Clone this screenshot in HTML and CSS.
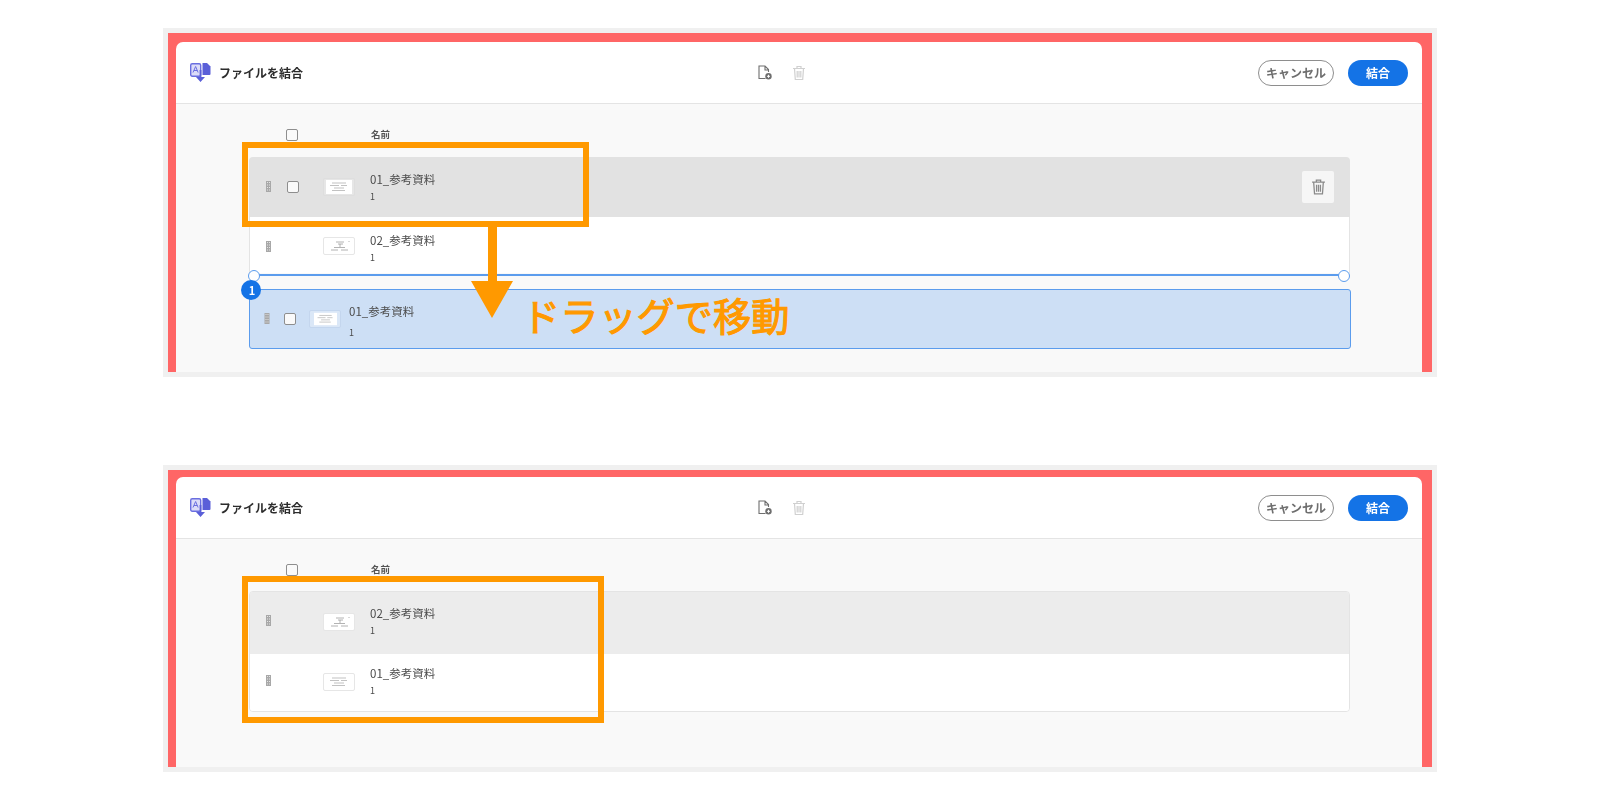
FILE: index.html
```html
<!DOCTYPE html>
<html lang="ja">
<head>
<meta charset="utf-8">
<title>ファイルを結合</title>
<link rel="stylesheet" href="styles.css">
</head>
<body>
<svg class="defs" width="0" height="0" aria-hidden="true">
  <defs>
    <symbol id="grip" viewBox="0 0 5 11">
      <rect width="5" height="11" fill="#a8a8a8"/>
      <path d="M1 1h1v1H1zM3 1h1v1H3zM1 3.500h1v1H1zM3 3.500h1v1H3zM1 6h1v1H1zM3 6h1v1H3zM1 8.500h1v1H1zM3 8.500h1v1H3z" fill="#e4e4e4"/>
    </symbol>
    <symbol id="doc-a" viewBox="0 0 26 14">
      <rect width="26" height="14" fill="#fff"/>
      <path d="M6 3h14M4 5.500h9M15 5.500h6M8 8h10M6 10.500h13" stroke="#a8a8a8" stroke-width=".7" fill="none"/>
    </symbol>
    <symbol id="doc-b" viewBox="0 0 26 14">
      <rect width="26" height="14" fill="#fff"/>
      <path d="M10 3h8M12 5h5M14 5v3M5 11h7M15 11h7M8 8.500h11M23 2v1" stroke="#a0a0a0" stroke-width=".8" fill="none"/>
    </symbol>
    <symbol id="trash" viewBox="0 0 14 16">
      <path d="M1 3.500h12M5 3.200V1.500h4v1.700M2.500 3.500l.8 11h7.400l.8-11M5.200 6v6.500M7 6v6.500M8.800 6v6.500" stroke="currentColor" stroke-width="1.200" fill="none"/>
    </symbol>
    <symbol id="logo" viewBox="0 0 21 21">
      <rect x=".7" y="1.700" width="10" height="12.500" rx="1.500" fill="#dcdcf8" stroke="#6a6ee0" stroke-width="1.400"/>
      <path d="M12.500 1H17l3.500 3.500V12a1 1 0 0 1-1 1h-7z" fill="#5a5fd8"/>
      <path d="M3 10.500 5.600 4.500l2.500 6M4 8.500h3.300" stroke="#6a6ee0" stroke-width="1" fill="none"/>
      <path d="M9.600 8h1.800v7H15l-4.500 5L6 15h3.600z" fill="#5a5fd8"/>
    </symbol>
  </defs>
</svg>

<section class="frame frame-first">
  <div class="card card-first">
    <header class="bar">
      <div class="bar-title">
        <svg class="logo"><use href="#logo"/></svg>
        <h1 class="title">ファイルを結合</h1>
      </div>
      <div class="bar-tools">
        <svg class="add-file" viewBox="0 0 15 15"><path d="M8.500 13.500H2V1h6l3.500 3.500V7M8 1v4h3.500" stroke="#6e6e6e" stroke-width="1.100" fill="none"/><circle cx="11.500" cy="11.300" r="3.200" fill="#6e6e6e"/><path d="M10 11.300h3M11.500 9.800v3" stroke="#fff" stroke-width="1"/></svg>
        <svg class="tool-trash"><use href="#trash"/></svg>
      </div>
      <div class="bar-actions">
        <button class="btn btn-cancel">キャンセル</button>
        <button class="btn btn-merge">結合</button>
      </div>
    </header>
    <div class="content content-first">
      <div class="list-head">
        <span class="check"></span>
        <span class="head-name">名前</span>
      </div>
      <div class="row row-hover">
        <svg class="grip"><use href="#grip"/></svg>
        <span class="check"></span>
        <span class="thumb thumb-plain"><svg class="thumb-img"><use href="#doc-a"/></svg></span>
        <div class="file"><div class="file-name">01_参考資料</div><div class="file-pages">1</div></div>
        <span class="row-delete"><svg class="row-trash"><use href="#trash"/></svg></span>
      </div>
      <div class="row row-open">
        <svg class="grip"><use href="#grip"/></svg>
        <span></span>
        <span class="thumb"><svg class="thumb-img"><use href="#doc-b"/></svg></span>
        <div class="file"><div class="file-name">02_参考資料</div><div class="file-pages">1</div></div>
      </div>
      <div class="drop-line"></div>
      <div class="row-drag">
        <span class="badge">1</span>
        <svg class="grip grip-drag"><use href="#grip"/></svg>
        <span class="check"></span>
        <span class="thumb thumb-drag"><svg class="thumb-img thumb-img-small"><use href="#doc-a"/></svg></span>
        <div class="file file-drag"><div class="file-name">01_参考資料</div><div class="file-pages">1</div></div>
      </div>
    </div>
  </div>
  <div class="mark mark-first"></div>
  <svg class="arrow" viewBox="0 0 42 91"><path d="M17 0h9v54h16L21 91 0 54h17z" fill="#ff9900"/></svg>
  <div class="drag-label">ドラッグで移動</div>
</section>

<section class="frame frame-second">
  <div class="card card-second">
    <header class="bar">
      <div class="bar-title">
        <svg class="logo"><use href="#logo"/></svg>
        <h1 class="title">ファイルを結合</h1>
      </div>
      <div class="bar-tools">
        <svg class="add-file" viewBox="0 0 15 15"><path d="M8.500 13.500H2V1h6l3.500 3.500V7M8 1v4h3.500" stroke="#6e6e6e" stroke-width="1.100" fill="none"/><circle cx="11.500" cy="11.300" r="3.200" fill="#6e6e6e"/><path d="M10 11.300h3M11.500 9.800v3" stroke="#fff" stroke-width="1"/></svg>
        <svg class="tool-trash"><use href="#trash"/></svg>
      </div>
      <div class="bar-actions">
        <button class="btn btn-cancel">キャンセル</button>
        <button class="btn btn-merge">結合</button>
      </div>
    </header>
    <div class="content content-second">
      <div class="list-head list-head-tight">
        <span class="check"></span>
        <span class="head-name">名前</span>
      </div>
      <div class="list">
        <div class="row row-grey">
          <svg class="grip"><use href="#grip"/></svg>
          <span></span>
          <span class="thumb"><svg class="thumb-img"><use href="#doc-b"/></svg></span>
          <div class="file"><div class="file-name">02_参考資料</div><div class="file-pages">1</div></div>
        </div>
        <div class="row row-white">
          <svg class="grip"><use href="#grip"/></svg>
          <span></span>
          <span class="thumb"><svg class="thumb-img"><use href="#doc-a"/></svg></span>
          <div class="file"><div class="file-name">01_参考資料</div><div class="file-pages">1</div></div>
        </div>
      </div>
    </div>
  </div>
  <div class="mark mark-second"></div>
</section>
</body>
</html>
```

FILE: styles.css
```css
* { box-sizing: border-box; }

html, body { margin: 0; padding: 0; background: #fff; }

body {
  width: 1600px;
  height: 800px;
  overflow: hidden;
  padding: 28px 0 0 163px;
  font-family: "Noto Sans CJK JP", "Noto Sans", sans-serif;
  color: #4b4b4b;
}

.defs { position: absolute; }

.frame {
  position: relative;
  width: 1274px;
  padding: 5px;
  background: #f0f0f0;
}
.frame-second { margin-top: 88px; }

.card {
  background: #ff6666;
  border-style: solid;
  border-color: #ff6666;
  border-width: 9px 10px 0 8px;
  overflow: hidden;
  filter: blur(.35px);
}
.card-second { border-top-width: 7px; }

.bar {
  display: flex;
  align-items: center;
  height: 62px;
  padding: 0 14px;
  background: #fff;
  border-bottom: 1px solid #e4e4e4;
  border-top-left-radius: 7px;
  border-top-right-radius: 7px;
}
.bar-title { display: flex; align-items: center; gap: 8px; width: 567px; }
.logo { width: 21px; height: 21px; }
.title { margin: 0; font-size: 12px; font-weight: 700; line-height: 16px; color: #2c2c2c; }

.bar-tools { display: flex; align-items: center; gap: 20px; }
.add-file { width: 15px; height: 15px; }
.tool-trash { width: 14px; height: 16px; color: #d0d0d0; }

.bar-actions { display: flex; gap: 14px; margin-left: auto; }
.btn {
  height: 26px;
  padding: 0;
  border-radius: 13px;
  font-family: inherit;
  font-size: 12px;
  font-weight: 700;
  line-height: 1;
}
.btn-cancel { width: 76px; background: #fff; border: 1.500px solid #8e8e8e; color: #6e6e6e; }
.btn-merge { width: 60px; background: #1473e6; border: 0; color: #fff; }

.content { padding: 24px 0 0 73px; background: #f9f9f9; }
.content-first { height: 268px; }
.content-second { height: 228px; }

.list-head {
  display: grid;
  grid-template-columns: 84px 1fr;
  align-items: center;
  width: 1101px;
  height: 13px;
  margin-bottom: 16px;
  padding-left: 37px;
}
.list-head-tight { margin-bottom: 15px; }
.head-name { padding-left: 1px; font-size: 9.500px; font-weight: 700; line-height: 13px; color: #555; }

.check {
  display: block;
  width: 12px;
  height: 12px;
  background: #fafafa;
  border: 1.300px solid #8e8e8e;
  border-radius: 2px;
}

.row {
  display: grid;
  grid-template-columns: 21px 36px 47px 1fr auto;
  align-items: center;
  width: 1101px;
  padding-left: 17px;
}
.row-hover { height: 60px; background: #e2e2e2; border-radius: 4px 4px 0 0; }
.row-open {
  height: 56px;
  background: #fff;
  border: solid #e4e4e4;
  border-width: 0 1px;
  padding-left: 16px;
}
.row-grey { height: 62px; padding-bottom: 3px; background: #ececec; }
.row-white { height: 57px; padding-bottom: 2px; background: #fff; }

.list {
  width: 1101px;
  border: 1px solid #e4e4e4;
  border-radius: 4px;
  overflow: hidden;
}
.list .row { width: 1099px; padding-left: 16px; }

.grip { width: 5px; height: 11px; margin-bottom: 2px; }
.row-open .grip { margin: 2px 0 0; }

.thumb {
  display: flex;
  align-items: center;
  justify-content: center;
  width: 32px;
  height: 18px;
  background: #fff;
  border: 1px solid #e6e6e6;
  border-radius: 2px;
}
.row-open .thumb { margin-top: 2px; }
.thumb-plain { border-color: #dedede; background: #e6e6e6; }
.thumb-drag { border-color: #c4d6ee; background: #dae7f7; }
.thumb-img { width: 26px; height: 14px; }
.thumb-img-small { width: 23px; height: 14px; }

.file { padding-top: 1px; }
.file-name { font-size: 11.500px; line-height: 16px; color: #4b4b4b; white-space: nowrap; }
.file-pages { margin-top: 2px; font-size: 9px; line-height: 16px; color: #4b4b4b; }
.row-hover .file { padding-top: 2px; }
.row-open .file { padding-top: 8px; }
.file-drag { padding-top: 5px; }
.file-drag .file-pages { margin-top: 6px; }

.row-delete {
  display: flex;
  align-items: center;
  justify-content: center;
  width: 32px;
  height: 32px;
  margin-right: 16px;
  background: #f6f6f6;
  border-radius: 2px;
}
.row-trash { width: 15px; height: 18px; color: #8a8a8a; }

.drop-line {
  position: relative;
  width: 1092px;
  height: 2px;
  margin-left: 4px;
  margin-top: 1px;
  margin-bottom: 13px;
  background: #5b9ced;
}
.drop-line::before,
.drop-line::after {
  content: "";
  position: absolute;
  top: -4px;
  width: 10px;
  height: 10px;
  background: #fff;
  border: 1.500px solid #5b9ced;
  border-radius: 50%;
}
.drop-line::before { left: -5px; }
.drop-line::after { right: -5px; }

.row-drag {
  position: relative;
  display: grid;
  grid-template-columns: 20px 25px 40px 1fr;
  align-items: center;
  width: 1102px;
  height: 60px;
  padding-left: 14px;
  background: #cddff5;
  border: 1.500px solid #5b9ced;
  border-radius: 3px;
}
.grip-drag { width: 6px; height: 11px; }

.badge {
  position: absolute;
  left: -9px;
  top: -10px;
  width: 20px;
  height: 20px;
  padding-left: 2px;
  border-radius: 50%;
  background: #1473e6;
  color: #fff;
  font-size: 11px;
  font-weight: 700;
  line-height: 20px;
  text-align: center;
}

.mark {
  position: absolute;
  left: 79px;
  border: 6.500px solid #ff9900;
}
.mark-first { top: 114px; width: 347px; height: 85px; }
.mark-second { top: 111px; width: 362px; height: 147px; }

.arrow {
  position: absolute;
  left: 308px;
  top: 199px;
  width: 42px;
  height: 91px;
}

.drag-label {
  position: absolute;
  left: 359px;
  top: 264px;
  font-size: 38.200px;
  font-weight: 400;
  line-height: 46px;
  color: #ff9900;
  white-space: nowrap;
  -webkit-text-stroke: 1.100px #ff9900;
}
```
